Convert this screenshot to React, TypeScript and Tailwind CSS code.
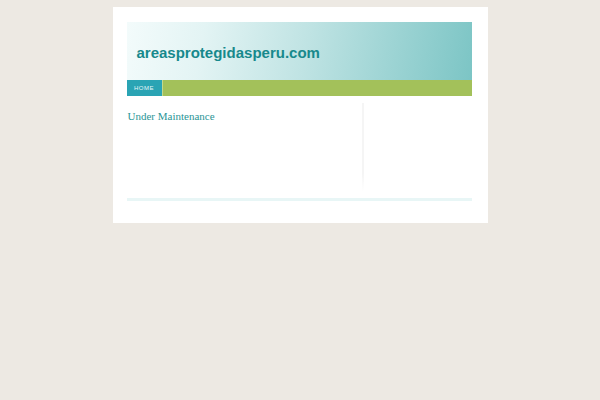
export default function App() {
  return (
    <div className="min-h-[400px] bg-[#ede9e3] pt-[7px]">
      <div className="mx-auto w-[375px] bg-white pl-[14px] pr-[16px] pt-[15px] pb-[22px]">
        <div className="h-[58px] bg-[linear-gradient(100deg,#f3fbfb_0%,#e3f4f4_22%,#bfe3e3_52%,#7cc5c5_100%)] pl-[10px] pt-[22px]">
          <h1 className="text-[15px] leading-[17px] font-bold text-[#17898c] font-['Liberation_Sans',Arial,sans-serif]">
            areasprotegidasperu.com
          </h1>
        </div>
        <nav className="flex h-[16px] bg-[#a3c15a]">
          <a className="flex w-[35px] items-center justify-center bg-[#2aa4b4] text-[6px] tracking-[0.5px] uppercase text-[#e6f6f8] font-['Liberation_Sans',Arial,sans-serif]">
            Home
          </a>
          <div className="w-px bg-[#c4d98c]" />
        </nav>
        <div className="mt-[7px] flex h-[88px]">
          <div className="w-[235px] pt-[7px] pl-px">
            <h2 className="text-[11px] leading-[13px] text-[#2a9596] font-['Liberation_Serif','Times_New_Roman',serif]">
              Under Maintenance
            </h2>
          </div>
          <div className="w-[2px] bg-[linear-gradient(180deg,#f5f5f5_0%,#f5f5f5_80%,#ffffff_100%)]" />
        </div>
        <div className="mt-[7px] h-[3px] bg-[#e8f6f6]" />
      </div>
    </div>
  )
}
